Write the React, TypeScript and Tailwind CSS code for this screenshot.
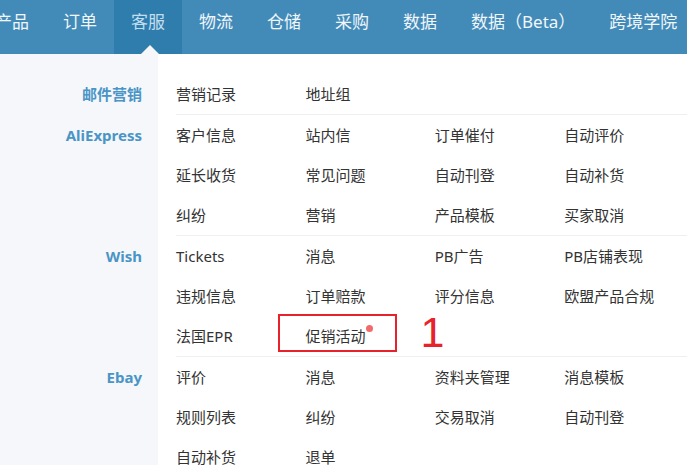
import React from "react";

const navItems = ["产品", "订单", "客服", "物流", "仓储", "采购", "数据", "数据（Beta）", "跨境学院"];

type Group = { label: string; rows: string[][] };

const groups: Group[] = [
  { label: "邮件营销", rows: [["营销记录", "地址组"]] },
  {
    label: "AliExpress",
    rows: [
      ["客户信息", "站内信", "订单催付", "自动评价"],
      ["延长收货", "常见问题", "自动刊登", "自动补货"],
      ["纠纷", "营销", "产品模板", "买家取消"],
    ],
  },
  {
    label: "Wish",
    rows: [
      ["Tickets", "消息", "PB广告", "PB店铺表现"],
      ["违规信息", "订单赔款", "评分信息", "欧盟产品合规"],
      ["法国EPR", "促销活动"],
    ],
  },
  {
    label: "Ebay",
    rows: [
      ["评价", "消息", "资料夹管理", "消息模板"],
      ["规则列表", "纠纷", "交易取消", "自动刊登"],
      ["自动补货", "退单"],
    ],
  },
];

export default function App() {
  return (
    <div className="w-[687px] h-[465px] overflow-hidden bg-white font-['Noto_Sans','Noto_Sans_CJK_SC',sans-serif]">
      <nav className="h-[54px] bg-[#428bb9] flex ml-[-22px] whitespace-nowrap">
        {navItems.map((item) => {
          const active = item === "客服";
          return (
            <div
              key={item}
              className={
                active
                  ? "relative h-full px-[17px] bg-[#2f7dad] text-[#c2ddef] text-[17px] leading-[44px]"
                  : "relative h-full px-[17px] text-[#f1f6fa] text-[17px] leading-[44px]"
              }
            >
              {item}
              {active && (
                <span className="absolute bottom-0 left-[27px] w-0 h-0 border-x-[9.5px] border-x-transparent border-b-[9px] border-b-[#f5f7fa]" />
              )}
            </div>
          );
        })}
      </nav>
      <div className="flex flex-col">
        {groups.map((g, gi) => (
          <div key={g.label} className="flex">
            <div
              className={
                gi === 0
                  ? "w-[158px] shrink-0 bg-[#f5f7fa] pr-[16px] pt-[20px] text-right"
                  : "w-[158px] shrink-0 bg-[#f5f7fa] pr-[16px] text-right"
              }
            >
              <div
                className={
                  gi === 0
                    ? "text-[15px] leading-[40px] font-bold text-[#4a95c6]"
                    : "mt-px text-[15px] leading-[40px] font-bold text-[#4a95c6]"
                }
              >
                {g.label}
              </div>
            </div>
            <div className={gi === 0 ? "flex-1 pl-[18px] pt-[20px]" : "flex-1 pl-[18px]"}>
              <div className={gi === 0 ? "" : "border-t border-[#efefef]"}>
                {g.rows.map((row, ri) => (
                  <div key={ri} className="flex h-[40px]">
                    {row.map((cell) => (
                      <div
                        key={cell}
                        className="relative w-[129.4px] shrink-0 text-[15px] leading-[40px] text-[#333] whitespace-nowrap"
                      >
                        {cell}
                        {cell === "促销活动" && (
                          <>
                            <span className="absolute left-[61px] top-[9px] w-[7px] h-[7px] rounded-full bg-[#f26b6b]" />
                            <span className="absolute left-[-27px] top-[-2px] w-[119px] h-[38px] border-2 border-[#e8222b]" />
                            <span className="absolute left-[115px] top-[-5px] text-[43px] leading-none text-[#e8222b] font-['Liberation_Sans',sans-serif]">
                              1
                            </span>
                          </>
                        )}
                      </div>
                    ))}
                  </div>
                ))}
              </div>
            </div>
          </div>
        ))}
      </div>
    </div>
  );
}
